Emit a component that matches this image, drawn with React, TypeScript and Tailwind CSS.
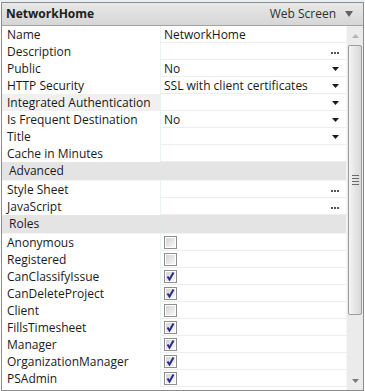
import React from 'react';

type Row =
  | { kind: 'item'; label: string; value?: string; editor?: 'dropdown' | 'dots' | 'none'; highlight?: boolean }
  | { kind: 'cat'; label: string }
  | { kind: 'check'; label: string; checked: boolean };

const rows: Row[] = [
  { kind: 'item', label: 'Name', value: 'NetworkHome', editor: 'none' },
  { kind: 'item', label: 'Description', editor: 'dots' },
  { kind: 'item', label: 'Public', value: 'No', editor: 'dropdown' },
  { kind: 'item', label: 'HTTP Security', value: 'SSL with client certificates', editor: 'dropdown' },
  { kind: 'item', label: 'Integrated Authentication', editor: 'dropdown', highlight: true },
  { kind: 'item', label: 'Is Frequent Destination', value: 'No', editor: 'dropdown' },
  { kind: 'item', label: 'Title', editor: 'dropdown' },
  { kind: 'item', label: 'Cache in Minutes', editor: 'none' },
  { kind: 'cat', label: 'Advanced' },
  { kind: 'item', label: 'Style Sheet', editor: 'dots' },
  { kind: 'item', label: 'JavaScript', editor: 'dots' },
  { kind: 'cat', label: 'Roles' },
  { kind: 'check', label: 'Anonymous', checked: false },
  { kind: 'check', label: 'Registered', checked: false },
  { kind: 'check', label: 'CanClassifyIssue', checked: true },
  { kind: 'check', label: 'CanDeleteProject', checked: true },
  { kind: 'check', label: 'Client', checked: false },
  { kind: 'check', label: 'FillsTimesheet', checked: true },
  { kind: 'check', label: 'Manager', checked: true },
  { kind: 'check', label: 'OrganizationManager', checked: true },
  { kind: 'check', label: 'PSAdmin', checked: true },
];

function DropArrow() {
  return (
    <svg width="7" height="4" viewBox="0 0 7 4" className="shrink-0">
      <path d="M0 0 L7 0 L3.5 4 Z" fill="#1a1a1a" />
    </svg>
  );
}

function Dots() {
  return (
    <svg width="8" height="2" viewBox="0 0 8 2" className="shrink-0 self-end mb-[5px]">
      <rect x="0" y="0" width="2" height="2" fill="#555" />
      <rect x="3" y="0" width="2" height="2" fill="#555" />
      <rect x="6" y="0" width="2" height="2" fill="#555" />
    </svg>
  );
}

function CheckBox({ checked }: { checked: boolean }) {
  return (
    <div className="w-[13px] h-[13px] border border-[#8e8f8f] bg-white p-[1px]">
      <div className="w-full h-full bg-gradient-to-br from-[#d4d4d4] to-[#f8f8f8] relative">
        {checked && (
          <svg width="11" height="11" viewBox="0 0 11 11" className="absolute -left-[1px] -top-[1px]">
            <path d="M2.5 5.5 L4.5 8.5 L8.5 1.5" stroke="#2c2c86" strokeWidth="2" fill="none" />
          </svg>
        )}
      </div>
    </div>
  );
}

function PropRow({ row }: { row: Row }) {
  if (row.kind === 'cat') {
    return (
      <div className="h-[19px] flex items-center bg-[#e4e4e4] pl-[7px] border-b border-[#f4f4f4]">
        {row.label}
      </div>
    );
  }
  return (
    <div className="h-[17px] flex">
      <div
        className={`w-[159px] shrink-0 flex items-center pl-[5px] pt-[1px] border-r border-[#e8f4f4] ${
          row.kind === 'item' && row.highlight ? 'bg-[#f0f0f0]' : 'bg-white'
        }`}
      >
        {row.label}
      </div>
      <div className="flex-1 flex items-center pl-[3px] pr-[7px] pt-[1px] border-b border-[#eeeeee]">
        {row.kind === 'check' ? (
          <CheckBox checked={row.checked} />
        ) : (
          <>
            <span className="flex-1">{row.value}</span>
            {row.editor === 'dropdown' && <DropArrow />}
            {row.editor === 'dots' && <Dots />}
          </>
        )}
      </div>
    </div>
  );
}

function ScrollBar() {
  return (
    <div className="w-[17px] shrink-0 bg-[#ebebeb] border-l border-[#f6f6f6] flex flex-col items-center">
      <div className="h-[19px] flex items-center justify-center">
        <svg width="7" height="4" viewBox="0 0 7 4">
          <path d="M0 4 L7 4 L3.5 0 Z" fill="#b5b5b5" />
        </svg>
      </div>
      <div className="w-[14px] h-[270px] rounded-[2px] border border-[#9c9c9c] bg-gradient-to-r from-[#f4f4f4] via-[#e6e6e6] to-[#d8d8d8] flex flex-col items-center justify-center gap-[2px]">
        <div className="w-[7px] h-[1px] bg-[#6a6a6a]" />
        <div className="w-[7px] h-[1px] bg-[#6a6a6a]" />
        <div className="w-[7px] h-[1px] bg-[#6a6a6a]" />
        <div className="w-[7px] h-[1px] bg-[#6a6a6a]" />
      </div>
      <div className="flex-1" />
      <div className="h-[18px] flex items-center justify-center">
        <svg width="7" height="4" viewBox="0 0 7 4">
          <path d="M0 0 L7 0 L3.5 4 Z" fill="#7a7a7a" />
        </svg>
      </div>
    </div>
  );
}

export default function App() {
  return (
    <div
      className="w-[365px] h-[391px] bg-white overflow-hidden text-[12px] text-[#1a1a1a] leading-none"
      style={{ fontFamily: '"Open Sans", "Noto Sans", sans-serif' }}
    >
      <div className="h-[2px] bg-[#e9eef3]" />
      <div className="ml-[1px] w-[363px] h-[389px] border border-[#8c8c8c] flex flex-col">
        <div className="h-[23px] shrink-0 flex items-center justify-between pl-[4px] pr-[10px] bg-gradient-to-b from-[#e8e8e8] to-[#d6d6d6] border-b border-[#a3a3a3]">
          <span className="font-bold text-[#202020]">NetworkHome</span>
          <span className="flex items-center gap-[9px] text-[#303030]">
            Web Screen
            <svg width="8" height="6" viewBox="0 0 8 6">
              <path d="M0 0 L8 0 L4 6 Z" fill="#606060" />
            </svg>
          </span>
        </div>
        <div className="flex-1 flex min-h-0">
          <div className="flex-1 flex flex-col">
            {rows.map((r) => (
              <PropRow key={r.label} row={r} />
            ))}
          </div>
          <ScrollBar />
        </div>
      </div>
    </div>
  );
}
